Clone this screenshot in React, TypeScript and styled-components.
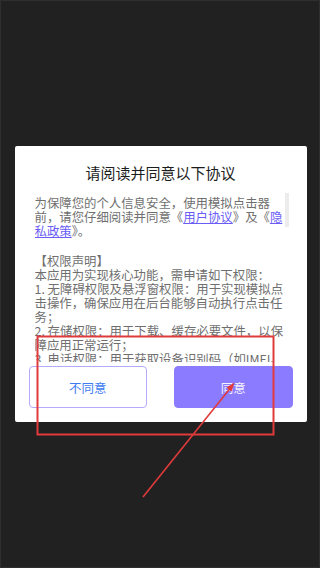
import React from "react";
import styled, { createGlobalStyle } from "styled-components";

const GlobalStyle = createGlobalStyle`
  html, body {
    margin: 0;
    padding: 0;
    background: #212121;
  }
  body {
    font-family: "Noto Sans CJK SC", "Noto Sans", sans-serif;
  }
`;

export default function App(): React.ReactElement {
  return (
    <>
      <GlobalStyle />
      <Screen>
        <Dialog>
          <Title>请阅读并同意以下协议</Title>

          <ScrollWrap>
            <ScrollBody>
              <Para>
                为保障您的个人信息安全，使用模拟点击器前，请您仔细阅读并同意《
                <Link>用户协议</Link>》及《<Link>隐私政策</Link>》。
              </Para>
              <Para>
                【权限声明】
                <br />
                本应用为实现核心功能，需申请如下权限：
                <br />
                1. 无障碍权限及悬浮窗权限：用于实现模拟点击操作，确保应用在后台能够自动执行点击任务；
                <br />
                2. 存储权限：用于下载、缓存必要文件，以保障应用正常运行；
                <br />
                3. 电话权限：用于获取设备识别码（如IMEI、Android ID），以保障账号安全及统计分析。
              </Para>
              <Para>
                我们会严格按照法律法规的要求保护您的个人信息，未经您的同意，不会向任何第三方提供您的信息。
              </Para>
            </ScrollBody>
            <ScrollThumb />
          </ScrollWrap>

          <ButtonRow>
            <Button>不同意</Button>
            <Button $primary>同意</Button>
          </ButtonRow>
        </Dialog>

        {/* red annotation drawn over the screenshot */}
        <Annotation viewBox="0 0 320 568" width="320" height="568">
          <rect
            x="37.5"
            y="336.5"
            width="236"
            height="98"
            fill="none"
            stroke="#e03a3a"
            strokeWidth="2"
          />
          <line
            x1="143"
            y1="497"
            x2="232"
            y2="386"
            stroke="#e03a3a"
            strokeWidth="1.6"
          />
          <polygon points="234.5,382.5 226.5,387.5 231.5,391.5" fill="#e03a3a" />
        </Annotation>
      </Screen>
    </>
  );
}

// Styled Components
const Screen = styled.div`
  position: relative;
  width: 320px;
  height: 568px;
  box-sizing: border-box;
  border: 1px solid #2e2e2e;
  background: #212121;
  display: flex;
  align-items: center;
  justify-content: center;
  overflow: hidden;
`;

const Dialog = styled.div`
  width: 292px;
  box-sizing: border-box;
  margin-left: 1px;
  padding: 0 14px 14px;
  background: #ffffff;
  border-radius: 2px;
  display: flex;
  flex-direction: column;
  flex-shrink: 0;

  & > * {
    flex-shrink: 0;
  }
`;

const Title = styled.div`
  padding-top: 17px;
  margin-bottom: 10px;
  height: 20px;
  line-height: 20px;
  text-align: center;
  font-size: 15px;
  color: #1c1c1c;
`;

const ScrollWrap = styled.div`
  position: relative;
  margin: 0 4px 0 6px;
  height: 169px;
  overflow: hidden;
`;

const ScrollBody = styled.div`
  height: 169px;
  box-sizing: border-box;
  padding: 3px 4px 0 0;
  overflow-y: auto;
  scrollbar-width: none;
  font-size: 12.4px;
  line-height: 14px;
  color: #6f6f6f;

  &::-webkit-scrollbar {
    display: none;
  }
`;

const ScrollThumb = styled.div`
  position: absolute;
  top: 0;
  right: 0;
  width: 4px;
  height: 34px;
  background: #ececec;
`;

const Para = styled.p`
  margin: 0 0 16px;
`;

const Link = styled.span`
  color: #6a5cf6;
  text-decoration: underline;
`;

const ButtonRow = styled.div`
  margin-top: 4px;
  height: 42px;
  display: flex;
  gap: 27px;
`;

const Button = styled.button<{ $primary?: boolean }>`
  flex: 1;
  height: 42px;
  padding: 0;
  border-radius: 4px;
  font-family: inherit;
  font-size: 12.5px;
  cursor: pointer;
  border: 1px solid ${(p) => (p.$primary ? "#8b7bff" : "#b4aafc")};
  background: ${(p) => (p.$primary ? "#8b7bff" : "#ffffff")};
  color: ${(p) => (p.$primary ? "#f4f2ff" : "#3e7bf2")};
`;

const Annotation = styled.svg`
  position: absolute;
  top: -1px;
  left: -1px;
  pointer-events: none;
`;
